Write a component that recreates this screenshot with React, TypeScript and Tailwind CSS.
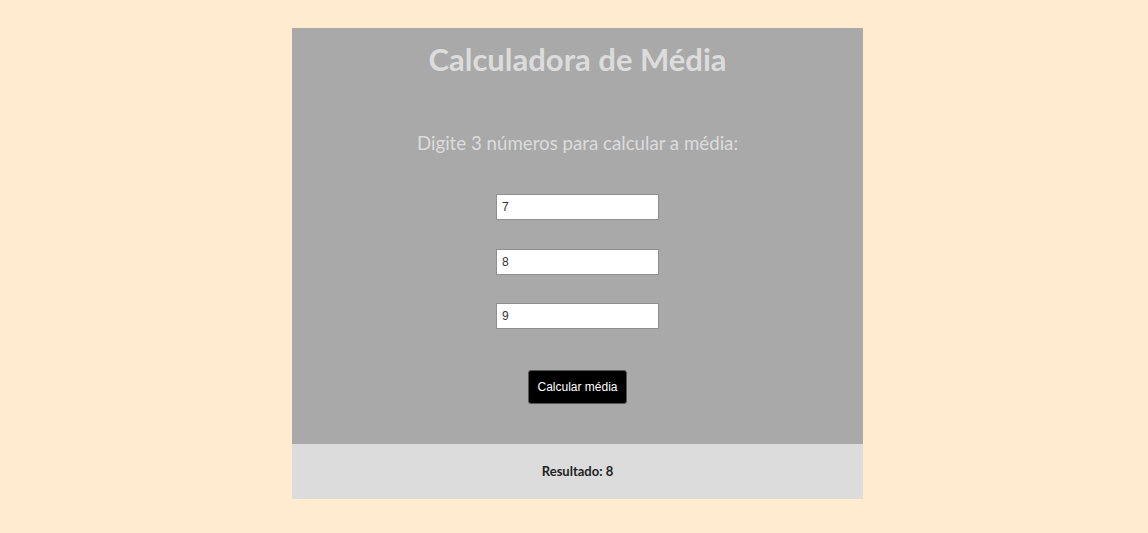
export default function App() {
  const values = ['7', '8', '9']
  return (
    <div className="min-h-[533px] w-full bg-[#ffebcd] pl-[7px] pt-[28px]">
      <div className="mx-auto w-[571px]">
        <div className="flex flex-col items-center bg-[#a9a9a9] pb-[40px] font-['Lato',sans-serif] text-[#dcdcdc]">
          <h1 className="mt-[13px] text-[31px] font-bold leading-[36px]">Calculadora de Média</h1>
          <p className="mt-[54px] text-[18.7px] leading-[24px]">Digite 3 números para calcular a média:</p>
          <div className="mt-[39px] flex flex-col gap-[28.5px]">
            {values.map((v) => (
              <input
                key={v}
                type="text"
                defaultValue={v}
                className="h-[26px] w-[163px] border border-[#8f8f8f] bg-white px-[5px] font-['Liberation_Sans',sans-serif] text-[12px] text-[#333]"
              />
            ))}
          </div>
          <button className="mt-[41px] h-[34px] w-[99px] rounded-[3px] border border-[#555] bg-black font-['Liberation_Sans',sans-serif] text-[12px] text-white">
            Calcular média
          </button>
        </div>
        <div className="flex h-[55px] items-center justify-center bg-[#dcdcdc] font-['Lato',sans-serif] text-[13px] font-bold text-[#222]">
          Resultado: 8
        </div>
      </div>
    </div>
  )
}
